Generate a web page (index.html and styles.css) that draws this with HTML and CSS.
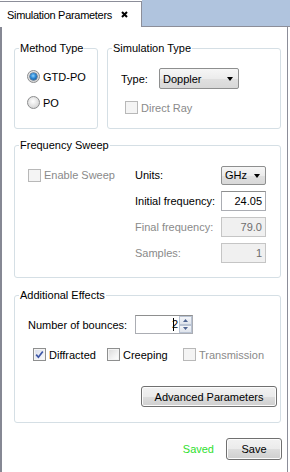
FILE: index.html
```html
<!DOCTYPE html>
<html>
<head>
<meta charset="utf-8">
<link rel="stylesheet" href="styles.css">
</head>
<body>
<div class="tabbar">
  <div class="tab">
    <span class="tab-title">Simulation Parameters</span>
    <svg class="tab-close" width="7" height="7" viewBox="0 0 7 7"><path d="M1 1 L6 6 M6 1 L1 6" stroke="#000" stroke-width="2" fill="none"/></svg>
  </div>
  <div class="tab-fill"></div>
</div>
<div class="panel">
  <div class="row-top">
    <fieldset class="group g-method">
      <legend>Method Type</legend>
      <div class="inner method-inner">
        <div class="opt"><span class="radio on"></span><span>GTD-PO</span></div>
        <div class="opt"><span class="radio"></span><span>PO</span></div>
      </div>
    </fieldset>
    <fieldset class="group g-sim">
      <legend>Simulation Type</legend>
      <div class="inner sim-inner">
        <div class="type-row"><span class="type-label">Type:</span><span class="combo combo-type"><span>Doppler</span><span class="arrow"></span></span></div>
        <div class="opt disabled direct"><span class="check dis"></span><span>Direct Ray</span></div>
      </div>
    </fieldset>
  </div>

  <fieldset class="group g-freq">
    <legend>Frequency Sweep</legend>
    <div class="inner freq-grid">
      <div class="opt disabled"><span class="check dis"></span><span>Enable Sweep</span></div>
      <span class="flabel">Units:</span>
      <span class="combo combo-units"><span>GHz</span><span class="arrow"></span></span>

      <span></span>
      <span class="flabel">Initial frequency:</span>
      <span class="field">24.05</span>

      <span></span>
      <span class="flabel dim">Final frequency:</span>
      <span class="field off">79.0</span>

      <span></span>
      <span class="flabel dim">Samples:</span>
      <span class="field off">1</span>
    </div>
  </fieldset>

  <fieldset class="group g-effects">
    <legend>Additional Effects</legend>
    <div class="inner effects-inner">
      <div class="bounce-row">
        <span class="blabel">Number of bounces:</span>
        <div class="spin">
          <span class="spin-val"><span class="caret"></span>2</span>
          <span class="spin-btns">
            <span class="sb"><svg width="5" height="3" viewBox="0 0 5 3"><path d="M0 3 L2.5 0 L5 3 Z" fill="#4e6391"/></svg></span>
            <span class="sb"><svg width="5" height="3" viewBox="0 0 5 3"><path d="M0 0 L2.5 3 L5 0 Z" fill="#4e6391"/></svg></span>
          </span>
        </div>
      </div>
      <div class="checks-row">
        <div class="opt c-diff"><span class="check on"><svg width="11" height="11" viewBox="0 0 11 11"><path d="M2.2 5.6 L4.4 8.2 L8.8 2.4" stroke="#3d56a6" stroke-width="1.7" fill="none"/></svg></span><span>Diffracted</span></div>
        <div class="opt c-creep"><span class="check"></span><span>Creeping</span></div>
        <div class="opt disabled c-trans"><span class="check dis"></span><span>Transmission</span></div>
      </div>
      <div class="adv-row"><span class="btn adv">Advanced Parameters</span></div>
    </div>
  </fieldset>

  <div class="save-row">
    <span class="saved">Saved</span>
    <span class="btn save">Save</span>
  </div>
</div>
</body>
</html>
```
FILE: styles.css
```css
* { box-sizing: border-box; }
html, body { margin: 0; padding: 0; background: #fff; }
body {
  width: 290px;
  height: 472px;
  overflow: hidden;
  font-family: "Liberation Sans", Arial, sans-serif;
  font-size: 11px;
  color: #000;
}

.tabbar { display: flex; height: 27px; }
.tab {
  width: 142px;
  height: 26px;
  margin-top: 1px;
  border-top: 1px solid #8c8e99;
  border-right: 1px solid #8c8e99;
  background: #fff;
  display: flex;
  align-items: center;
  padding-left: 7px;
}
.tab-title { letter-spacing: -0.3px; }
.tab-close { margin-left: auto; margin-right: 13px; }
.tab-fill {
  flex: 1;
  height: 27px;
  background: #b0c4de;
  border-bottom: 1px solid #8c8e99;
}

.panel {
  width: 288px;
  height: 445px;
  border-left: 2px solid #868894;
  border-right: 1px solid #8c8e99;
  padding: 15px 5px 0 12px;
}

.group {
  margin: 0;
  padding: 0;
  min-width: 0;
  border: 1px solid #d5dfe5;
  border-radius: 3px;
}
.group legend {
  padding: 0 1px;
  margin-left: 4px;
  line-height: 13px;
  height: 13px;
}

.row-top { display: flex; gap: 9px; }
.g-method { width: 84px; height: 87px; }
.g-sim { width: 174px; height: 87px; }

.opt { display: flex; align-items: center; height: 13px; white-space: nowrap; }
.opt > span:first-child { margin-right: 3px; flex: none; }
.disabled { color: #8a8a8a; }

.method-inner { padding: 15px 0 0 12px; }
.method-inner .opt { margin-bottom: 13px; }

.radio {
  width: 13px;
  height: 13px;
  border-radius: 50%;
  border: 1px solid #8b8c8d;
  background: radial-gradient(circle at 45% 40%, #ffffff 0%, #e6e6e6 45%, #c9c9c9 100%);
  display: flex;
  align-items: center;
  justify-content: center;
}
.radio.on::after {
  content: "";
  width: 7px;
  height: 7px;
  border-radius: 50%;
  background: radial-gradient(circle at 45% 40%, #8fd3ff 0%, #2a86d3 45%, #0c3f77 100%);
  box-shadow: 0 0 0 0.5px #1b3f63;
}

.check {
  width: 13px;
  height: 13px;
  border: 1px solid #8e8f8f;
  background: linear-gradient(135deg, #d9d9d9 0%, #f2f2f2 60%, #ffffff 100%);
  box-shadow: inset 0 0 0 1px #f4f4f4;
  display: flex;
  align-items: center;
  justify-content: center;
}
.check.on { background: linear-gradient(135deg, #d6dbe8 0%, #eef0f6 60%, #fbfbfd 100%); }
.check.dis {
  border-color: #b8b8b8;
  background: #f4f4f4;
  box-shadow: none;
}

.sim-inner { padding: 13px 0 0 13px; }
.type-row { display: flex; align-items: center; height: 21px; }
.type-label { width: 38px; }
.combo {
  display: flex;
  align-items: center;
  justify-content: space-between;
  border: 1px solid #8e8f8f;
  border-radius: 2px;
  background: linear-gradient(#f6f6f6 0%, #ececec 50%, #e0e0e0 51%, #d8d8d8 100%);
  padding: 0 5px 0 3px;
}
.combo-type { width: 80px; height: 21px; }
.arrow {
  width: 0;
  height: 0;
  border-left: 3.5px solid transparent;
  border-right: 3.5px solid transparent;
  border-top: 4px solid #000;
  margin-top: 1px;
}
.direct { margin: 12px 0 0 4px; }

.g-freq { width: 267px; height: 139px; margin-top: 10px; }
.freq-grid {
  display: grid;
  grid-template-columns: 107px 86px 45px;
  grid-auto-rows: 20px;
  row-gap: 6px;
  align-items: center;
  padding: 13px 0 0 13px;
}
.flabel.dim { color: #8a8a8a; }
.combo-units { height: 19px; padding: 0 5px 0 3px; }
.field {
  height: 20px;
  border: 1px solid #abadb3;
  border-top-color: #8e8f8f;
  background: #fff;
  text-align: right;
  line-height: 18px;
  padding-right: 3px;
}
.field.off {
  background: #f0f0f0;
  border-color: #c5c5c5;
  color: #6d6d6d;
}

.g-effects { width: 267px; height: 134px; margin-top: 11px; }
.effects-inner { padding: 13px 0 0 13px; }
.bounce-row { display: flex; align-items: center; height: 19px; }
.blabel { width: 107px; }
.spin {
  width: 58px;
  height: 19px;
  border: 1px solid #abadb3;
  border-top-color: #8e8f8f;
  display: flex;
  background: #fff;
}
.spin-val {
  flex: 1;
  text-align: right;
  line-height: 17px;
  padding-right: 1px;
}
.caret {
  display: inline-block;
  width: 1px;
  height: 13px;
  background: #000;
  vertical-align: -3px;
  margin-right: -2px;
}
.spin-btns { width: 13px; display: flex; flex-direction: column; }
.sb {
  flex: 1;
  display: flex;
  align-items: center;
  justify-content: center;
  border: 1px solid #b9c3d3;
  background: linear-gradient(#f4f6fa, #dfe4ec);
}

.checks-row { display: flex; margin: 14px 0 0 5px; }
.c-diff { width: 74px; }
.c-creep { width: 76px; }

.adv-row { display: flex; margin-top: 25px; padding-left: 113px; }
.btn {
  display: flex;
  align-items: center;
  justify-content: center;
  border: 1px solid #707070;
  border-radius: 3px;
  background: linear-gradient(#f2f2f2 0%, #ebebeb 50%, #dddddd 51%, #cfcfcf 100%);
  box-shadow: inset 0 0 0 1px #fcfcfc;
}
.adv { width: 136px; height: 21px; }

.save-row {
  display: flex;
  align-items: center;
  justify-content: flex-end;
  margin-top: 15px;
}
.saved { color: #2ee02e; margin-right: 12px; }
.save { width: 56px; height: 22px; }
```
